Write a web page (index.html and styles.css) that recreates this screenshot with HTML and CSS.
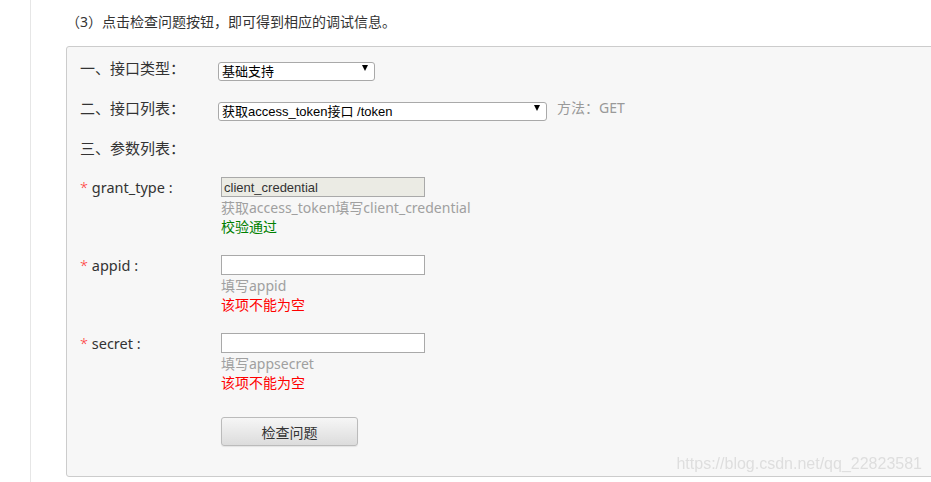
FILE: index.html
```html
<!DOCTYPE html>
<html lang="zh-CN">
  <head>
    <meta charset="UTF-8" />
    <meta name="viewport" content="width=device-width, initial-scale=1.0" />
    <title>接口调试</title>
    <link rel="stylesheet" href="styles.css">
  </head>
  <body>
    <div class="article">
      <p class="step">（3）点击检查问题按钮，即可得到相应的调试信息。</p>

      <div class="debug-box">
        <div class="row">
          <label class="row-label">一、接口类型：</label>
          <div class="select-wrap type-select">
            <select>
              <option>基础支持</option>
            </select>
            <span class="arrow"></span>
          </div>
        </div>

        <div class="row">
          <label class="row-label">二、接口列表：</label>
          <div class="select-wrap api-select">
            <select>
              <option>获取access_token接口 /token</option>
            </select>
            <span class="arrow"></span>
          </div>
          <span class="method">方法：GET</span>
        </div>

        <div class="row row-params">
          <label class="row-label">三、参数列表：</label>
        </div>

        <!-- 参数 -->
        <div class="param">
          <label class="row-label"><em>*</em> grant_type :</label>
          <div class="field">
            <input type="text" value="client_credential" disabled />
            <p class="hint">获取access_token填写client_credential</p>
            <p class="msg ok">校验通过</p>
          </div>
        </div>

        <div class="param">
          <label class="row-label"><em>*</em> appid :</label>
          <div class="field">
            <input type="text" />
            <p class="hint">填写appid</p>
            <p class="msg err">该项不能为空</p>
          </div>
        </div>

        <div class="param">
          <label class="row-label"><em>*</em> secret :</label>
          <div class="field">
            <input type="text" />
            <p class="hint">填写appsecret</p>
            <p class="msg err">该项不能为空</p>
          </div>
        </div>

        <button class="check-btn" type="button">检查问题</button>
      </div>
    </div>

    <div class="watermark">https://blog.csdn.net/qq_22823581</div>
  </body>
</html>
```

FILE: styles.css
```css
* {
  margin: 0;
  padding: 0;
  box-sizing: border-box;
}

html,
body {
  overflow: hidden;
}

body {
  height: 482px;
  background: #fff;
  color: #333;
  font-family: "Noto Sans", "Noto Sans CJK SC", sans-serif;
}

.article {
  margin-left: 30px;
  padding-left: 35px;
  min-height: 482px;
  border-left: 1px solid #e6e6e6;
}

.step {
  padding-top: 12px;
  font-size: 14px;
  line-height: 20px;
}

.debug-box {
  width: 900px;
  margin-top: 14px;
  padding: 11px 0 30px 13px;
  background: #f7f7f7;
  border: 1px solid #ccc;
  border-radius: 3px;
}

.row {
  display: flex;
  align-items: flex-start;
  margin-bottom: 20px;
}

.row-params {
  margin-bottom: 19px;
}

.row-label {
  width: 138px;
  flex-shrink: 0;
  font-size: 15px;
  line-height: 20px;
}

.row-label em {
  font-style: normal;
  font-weight: 300;
  color: #f33;
}

/* 下拉框 */
.select-wrap {
  position: relative;
  height: 19px;
  margin-top: 1px;
}

.select-wrap select {
  appearance: none;
  -webkit-appearance: none;
  width: 100%;
  height: 19px;
  padding: 0 14px 0 3px;
  background: #fff;
  border: 1px solid #a9a9a9;
  border-radius: 3px;
  color: #000;
  font: 13px/17px "Liberation Sans", "Noto Sans CJK SC", sans-serif;
  outline: none;
}

.type-select {
  width: 157px;
}

.api-select {
  width: 329px;
}

.arrow {
  position: absolute;
  top: 6px;
  right: 7px;
  width: 0;
  height: 0;
  border-left: 3px solid transparent;
  border-right: 3px solid transparent;
  border-top: 6px solid #000;
  pointer-events: none;
}

.method {
  margin-left: 10px;
  color: #999;
  font-size: 14px;
  line-height: 20px;
}

/* 参数列表 */
.param {
  display: flex;
  align-items: flex-start;
  margin-bottom: 19px;
}

.param .row-label {
  font-size: 14.5px;
}

.field {
  width: 204px;
  margin-left: 3px;
}

.field input {
  display: block;
  width: 204px;
  height: 20px;
  padding: 0 2px;
  background: #fff;
  border: 1px solid #a9a9a9;
  color: #333;
  font: 13px "Liberation Sans", "Noto Sans CJK SC", sans-serif;
  outline: none;
}

.field input:disabled {
  background: #ebebe4;
}

.hint {
  margin-top: 1px;
  color: #a0a0a0;
  font-size: 14px;
  line-height: 19px;
  white-space: nowrap;
}

.msg {
  font-size: 14px;
  line-height: 19px;
  white-space: nowrap;
}

.ok {
  color: #008000;
}

.err {
  color: #f00;
}

/* 与上一行的 margin 会折叠，这里直接写总间距 */
.check-btn {
  display: block;
  width: 137px;
  height: 29px;
  margin: 25px 0 0 141px;
  background: linear-gradient(#f6f6f6, #dcdcdc);
  border: 1px solid #bbb;
  border-radius: 3px;
  box-shadow: 0 1px 1px rgba(0, 0, 0, 0.08);
  color: #333;
  font-family: "Noto Sans", "Noto Sans CJK SC", sans-serif;
  font-size: 14px;
  cursor: pointer;
}

.watermark {
  position: fixed;
  right: 9px;
  bottom: 8px;
  color: #dedede;
  font: 16px/20px "Liberation Sans", sans-serif;
}
```
